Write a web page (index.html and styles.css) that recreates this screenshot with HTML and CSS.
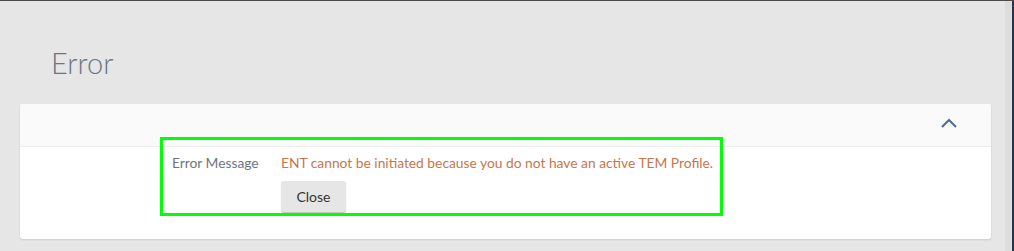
FILE: index.html
```html
<!DOCTYPE html>
<html>
<head>
<meta charset="utf-8">
<link rel="stylesheet" href="styles.css">
</head>
<body>
<div class="frame">
  <div class="page">
    <h1 class="title">Error</h1>
    <div class="card">
      <div class="card-header">
        <svg class="chevron" width="16" height="10" viewBox="0 0 16 10"><path d="M1 9 L8 2 L15 9" fill="none" stroke="#4a6d8f" stroke-width="2"/></svg>
      </div>
      <div class="card-body">
        <div class="row">
          <div class="label">Error Message</div>
          <div class="value">ENT cannot be initiated because you do not have an active TEM Profile.</div>
        </div>
        <div class="row">
          <div class="label"></div>
          <button class="btn">Close</button>
        </div>
      </div>
      <div class="highlight"></div>
    </div>
  </div>
  <div class="edge"></div>
</div>
</body>
</html>
```

FILE: styles.css
```css
html, body {
  margin: 0;
  padding: 0;
}
body {
  background: #e6e6e6;
  font-family: Lato, "Open Sans", sans-serif;
  overflow: hidden;
}
.frame {
  display: flex;
  height: 250px;
  border-top: 1px solid #4a4a4a;
}
.page {
  flex: 1;
  padding: 0 14px 0 20px;
}
.edge {
  flex: none;
  width: 7px;
  background: #dddddd;
  border-right: 2px solid #23364a;
}
.title {
  margin: 0;
  padding: 42px 0 0 31px;
  height: 61px;
  box-sizing: content-box;
  font-weight: 300;
  font-size: 29px;
  line-height: 40px;
  color: #6b7683;
}
.card {
  position: relative;
  background: #fff;
  border-radius: 3px;
  box-shadow: 0 1px 2px rgba(0,0,0,0.12);
}
.card-header {
  height: 42px;
  background: #fafafa;
  border-bottom: 1px solid #ececec;
  border-radius: 3px 3px 0 0;
  display: flex;
  justify-content: flex-end;
  align-items: center;
  padding-right: 34px;
}
.chevron {
  margin-top: -4px;
}
.card-body {
  padding: 5px 0 27px 152px;
}
.row {
  display: flex;
  align-items: flex-start;
}
.label {
  width: 109px;
  flex: none;
  font-size: 13.8px;
  line-height: 22px;
  color: #6b7683;
}
.value {
  font-size: 13.8px;
  line-height: 22px;
  color: #c9754b;
}
.btn {
  margin-top: 7px;
  height: 31px;
  width: 65px;
  border: none;
  border-radius: 3px;
  background: #e6e6e6;
  box-shadow: 0 1px 1px rgba(0,0,0,0.25);
  font-family: Lato, sans-serif;
  font-size: 14px;
  color: #333;
  padding: 0;
}
.highlight {
  position: absolute;
  left: 140px;
  top: 33px;
  width: 563px;
  height: 79px;
  box-sizing: border-box;
  border: 3px solid #00ff00;
}
```
